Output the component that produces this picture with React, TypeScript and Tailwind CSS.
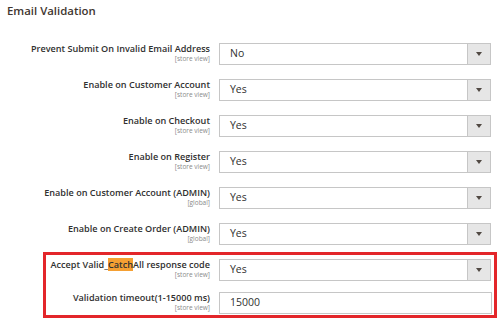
const ROWS = [
  { label: "Prevent Submit On Invalid Email Address", scope: "[store view]", value: "No" },
  { label: "Enable on Customer Account", scope: "[store view]", value: "Yes" },
  { label: "Enable on Checkout", scope: "[store view]", value: "Yes" },
  { label: "Enable on Register", scope: "[store view]", value: "Yes" },
  { label: "Enable on Customer Account (ADMIN)", scope: "[global]", value: "Yes" },
  { label: "Enable on Create Order (ADMIN)", scope: "[global]", value: "Yes" },
];

function Label({ children, scope, width }: { children: React.ReactNode; scope: string; width: string }) {
  return (
    <div className={`${width} shrink-0 text-right`}>
      <div className="whitespace-nowrap text-[9.1px] font-semibold leading-[12px] text-[#303030]">{children}</div>
      <div className="text-[6.5px] leading-[8px] text-[#8a8a8a]">{scope}</div>
    </div>
  );
}

function Select({ value }: { value: string }) {
  return (
    <div className="flex h-[22px] w-[272px] shrink-0 border border-[#c6c6c6] bg-white">
      <div className="flex flex-1 items-center pl-[10px] text-[10.5px] text-[#303030]">{value}</div>
      <div className="flex w-[23px] items-center justify-center border-l border-[#c6c6c6] bg-[#e6e6e6]">
        <div className="h-0 w-0 border-x-[3px] border-t-[4px] border-x-transparent border-t-[#514943]" />
      </div>
    </div>
  );
}

export default function App() {
  return (
    <div className="h-[321px] w-[499px] overflow-hidden bg-white font-['Open_Sans',sans-serif]">
      <div className="pl-[7px] pt-[2px] text-[11.4px] font-semibold leading-[17px] text-[#41362f]">
        Email Validation
      </div>

      <div className="mt-[24px] flex flex-col gap-[14px]">
        {ROWS.map((row) => (
          <div key={row.label} className="flex h-[22px] items-start gap-[9px]">
            <Label scope={row.scope} width="w-[210px]">
              {row.label}
            </Label>
            <Select value={row.value} />
          </div>
        ))}
      </div>

      <div className="ml-[43px] mt-[7px] flex w-[454px] flex-col gap-[11px] border-[3px] border-[#e3262a] pb-[1px] pt-[4px]">
        <div className="flex h-[22px] items-start gap-[9px]">
          <Label scope="[store view]" width="w-[164px]">
            Accept Valid_<span className="bg-[#f5a033]">Catch</span>All response code
          </Label>
          <Select value="Yes" />
        </div>
        <div className="flex h-[22px] items-start gap-[9px]">
          <Label scope="[store view]" width="w-[164px]">
            Validation timeout(1-15000 ms)
          </Label>
          <div className="flex h-[22px] w-[273px] shrink-0 items-center border border-[#c6c6c6] bg-white pl-[10px] text-[10.5px] text-[#303030]">
            15000
          </div>
        </div>
      </div>
    </div>
  );
}
